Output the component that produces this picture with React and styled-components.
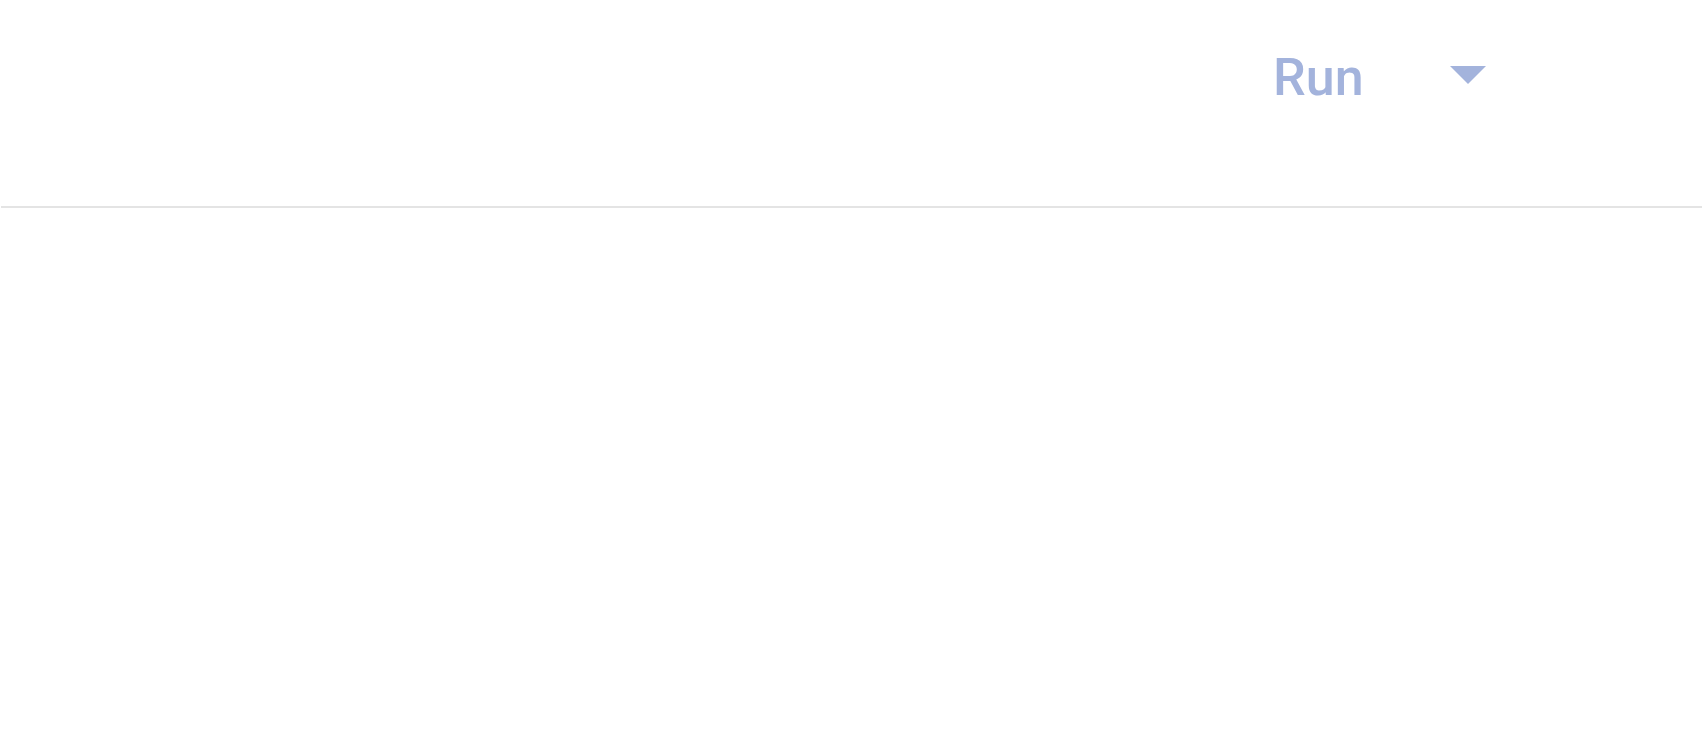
import React from 'react'
import styled, { createGlobalStyle } from 'styled-components'

const GlobalStyle = createGlobalStyle`
    html, body {
        margin: 0;
        padding: 0;
        background: #fff;
        font-family: Roboto, "Noto Sans", sans-serif;
    }
`

const Header = styled.header`
    height: 206px;
    margin: 0 1px;
    border-bottom: 2px solid #e4e4e4;
    display: flex;
    justify-content: flex-end;
    align-items: flex-start;
    padding-right: 216px;
`

const RunGroup = styled.div`
    width: 213px;
    display: flex;
    justify-content: space-between;
    align-items: flex-start;
    margin-top: 52px;
`

const RunLabel = styled.span`
    font-size: 52px;
    font-weight: 500;
    color: #a3b3dc;
    line-height: 1;
`

const Caret = styled.span`
    width: 0;
    height: 0;
    margin-top: 14px;
    border-left: 18px solid transparent;
    border-right: 18px solid transparent;
    border-top: 18px solid #a3b3dc;
`

const App = () => {
    return (
        <>
            <GlobalStyle />
            <Header>
                <RunGroup>
                    <RunLabel>Run</RunLabel>
                    <Caret />
                </RunGroup>
            </Header>
        </>
    )
}

export default App
